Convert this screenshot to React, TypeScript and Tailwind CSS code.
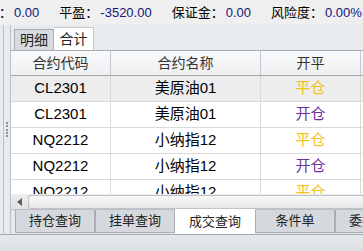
import React from 'react'

const rows = [
  { code: 'CL2301', name: '美原油01', oc: '平仓', sel: true },
  { code: 'CL2301', name: '美原油01', oc: '开仓' },
  { code: 'NQ2212', name: '小纳指12', oc: '平仓' },
  { code: 'NQ2212', name: '小纳指12', oc: '开仓' },
  { code: 'NQ2212', name: '小纳指12', oc: '平仓' },
]

const bottomTabs = ['持仓查询', '挂单查询', '成交查询', '条件单', '委托查询']

function Stat({ label, value, className }: { label: string; value: string; className?: string }) {
  return (
    <span className={className}>
      {label}
      <span className="ml-[2px] text-[#14147a]">{value}</span>
    </span>
  )
}

export default function App() {
  return (
    <div
      className="w-[363px] h-[251px] overflow-hidden flex flex-col bg-[#e8ebee] text-black"
      style={{ fontFamily: '"Liberation Sans", "Noto Sans CJK SC", sans-serif' }}
    >
      {/* account summary bar */}
      <div className="h-[25px] shrink-0 bg-[#efefef] flex items-center text-[13px] whitespace-nowrap overflow-hidden">
        <Stat label="：" value="0.00" className="-ml-[1px]" />
        <Stat label="平盈：" value="-3520.00" className="ml-[20px]" />
        <Stat label="保证金：" value="0.00" className="ml-[20px]" />
        <Stat label="风险度：" value="0.00%" className="ml-[20px]" />
      </div>

      <div className="flex-1 flex min-h-0">
        {/* left splitter */}
        <div className="w-[3px] shrink-0" />
        <div className="w-[7px] shrink-0 border-l border-[#bcc1c7] flex flex-col items-center justify-center gap-[1.3px]">
          {[0, 1, 2, 3, 4].map((i) => (
            <div key={i} className="w-[2px] h-[2px] bg-[#8d939a]" />
          ))}
        </div>

        <div className="flex-1 min-w-0 flex flex-col border-l border-[#bcc1c7]">
          {/* detail / summary tabs */}
          <div className="h-[25px] shrink-0 flex items-end pl-[3px] text-[14px]">
            <div className="w-[40px] h-[21px] bg-[#d7dadf] border border-b-0 border-[#aab0b7] flex items-center justify-center text-[#222]">
              明细
            </div>
            <div className="w-[40px] h-[23px] bg-white border-t border-r border-[#c4c9cf] flex items-center justify-center text-[#222]">
              合计
            </div>
          </div>

          {/* grid */}
          <div className="flex-1 min-h-0 overflow-hidden bg-white border-t border-[#a9aeb5]">
            <div className="flex h-[25px] border-b border-[#9fa5ac] bg-gradient-to-b from-[#f8f9fa] to-[#eef0f2] text-[14px] text-[#333]">
              <div className="w-[100px] shrink-0 border-r border-[#c6cad0] flex items-center justify-center">合约代码</div>
              <div className="w-[150px] shrink-0 border-r border-[#c6cad0] flex items-center justify-center">合约名称</div>
              <div className="w-[100px] shrink-0 border-r border-[#c6cad0] flex items-center justify-center">开平</div>
              <div className="flex-1" />
            </div>
            {rows.map((r, i) => (
              <div
                key={i}
                className={`flex h-[26px] border-b border-[#dadada] text-[15px] ${r.sel ? 'bg-[#ededed]' : 'bg-white'}`}
              >
                <div className="w-[100px] shrink-0 border-r border-[#dadada] flex items-center justify-center">{r.code}</div>
                <div className="w-[150px] shrink-0 border-r border-[#dadada] flex items-center justify-center">{r.name}</div>
                <div
                  className={`w-[100px] shrink-0 border-r border-[#dadada] flex items-center justify-center ${
                    r.oc === '平仓' ? 'text-[#f3c21b]' : 'text-[#6b2fa0]'
                  }`}
                >
                  {r.oc}
                </div>
                <div className="flex-1" />
              </div>
            ))}
          </div>

          {/* horizontal scrollbar */}
          <div className="h-[15px] shrink-0 flex bg-gradient-to-b from-[#ececec] to-[#e2e2e2]">
            <div className="w-[17px] shrink-0 flex items-center justify-center">
              <svg width="5" height="8" viewBox="0 0 5 8">
                <path d="M5 0 L0 4 L5 8 Z" fill="#5a5a5a" />
              </svg>
            </div>
            <div className="flex-1 mt-px -mr-[4px] rounded-l-[3px] border border-r-0 border-[#bfc2c6] bg-gradient-to-b from-[#f8f8f8] to-[#e6e7e8]" />
          </div>

          {/* bottom tabs */}
          <div className="h-[25px] shrink-0 flex items-start pl-[4px] text-[13px] whitespace-nowrap border-t border-[#b9bec4]">
            {bottomTabs.map((t, i) =>
              i === 2 ? (
                <div key={t} className="w-[80px] shrink-0 h-[25px] -mt-px bg-white flex items-center justify-center text-[#222]">
                  {t}
                </div>
              ) : (
                <div
                  key={t}
                  className="w-[80px] shrink-0 h-[23px] bg-[#d5d9de] border border-t-0 border-[#a8aeb5] flex items-center justify-center text-[#222]"
                >
                  {t}
                </div>
              )
            )}
          </div>
        </div>
      </div>

      {/* status bar */}
      <div className="h-[17px] shrink-0 border-t border-[#a3a8ae] bg-gradient-to-b from-[#e6e8eb] to-[#dcdfe3]" />
    </div>
  )
}
